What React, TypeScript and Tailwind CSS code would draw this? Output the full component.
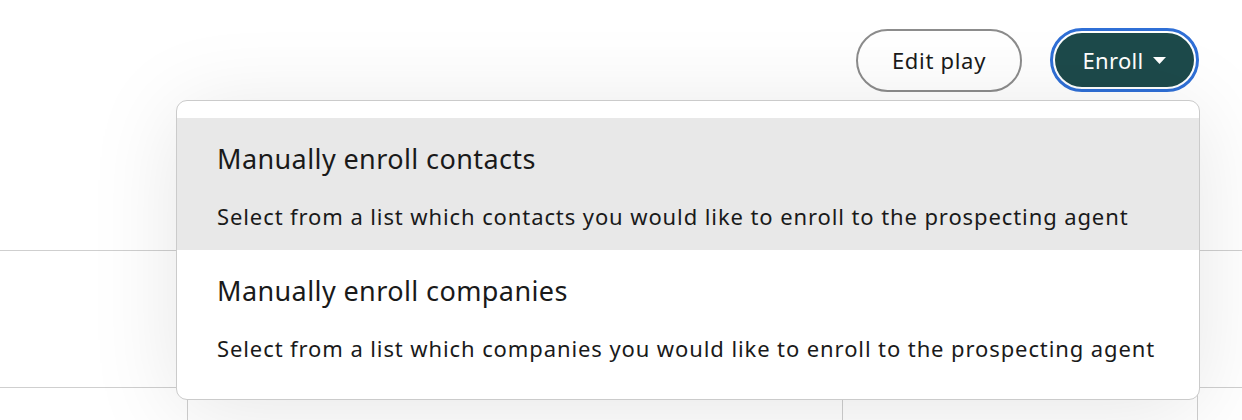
import React from "react";

const items = [
  {
    title: "Manually enroll contacts",
    desc: "Select from a list which contacts you would like to enroll to the prospecting agent",
    active: true,
  },
  {
    title: "Manually enroll companies",
    desc: "Select from a list which companies you would like to enroll to the prospecting agent",
    active: false,
  },
];

export default function App() {
  return (
    <div
      className="relative w-[1242px] h-[420px] overflow-hidden bg-white text-[#1a1a1a]"
      style={{ fontFamily: "'Noto Sans', sans-serif" }}
    >
      {/* header buttons */}
      <div className="flex justify-end items-center gap-[28px] pr-[43px] pt-[28px] h-[92px]">
        <button className="h-[63px] w-[166px] rounded-full border-2 border-[#8c8c8c] bg-white text-[22px] tracking-[0.7px] text-[#1a1a1a]">
          Edit play
        </button>
        <div className="rounded-full border-[3px] border-[#2f6fd6] p-[2px]">
          <button className="h-[54px] w-[139px] rounded-full bg-[#1d4a4b] text-white text-[22px] tracking-[0.3px] flex items-center justify-center gap-[10px]">
            <span>Enroll</span>
            <svg width="13" height="7" viewBox="0 0 13 7">
              <path d="M0 0 L13 0 L6.5 7 Z" fill="white" />
            </svg>
          </button>
        </div>
      </div>

      {/* background table */}
      <div className="mt-[158px] border-t border-[#cfcfcf]">
        <div className="h-[137px] border-b border-[#cfcfcf]" />
        <div className="flex h-[40px]">
          <div className="w-[187px]" />
          <div className="w-[655px] border-l border-[#cfcfcf]" />
          <div className="w-[356px] border-l border-r border-[#cfcfcf]" />
        </div>
      </div>

      {/* dropdown */}
      <div className="absolute left-[176px] top-[100px] w-[1024px] rounded-[11px] border border-[#cbcbcb] bg-white py-[17px] shadow-[0_10px_90px_rgba(0,0,0,0.10)]">
        {items.map((it) => (
          <div
            key={it.title}
            className={`h-[132px] pl-[40px] pt-[23px] ${it.active ? "bg-[#e8e8e8]" : ""}`}
          >
            <div className="text-[27px] leading-[36px] tracking-[0.4px]">{it.title}</div>
            <div className="mt-[24px] text-[22px] leading-[30px] tracking-[0.9px]">{it.desc}</div>
          </div>
        ))}
      </div>
    </div>
  );
}
